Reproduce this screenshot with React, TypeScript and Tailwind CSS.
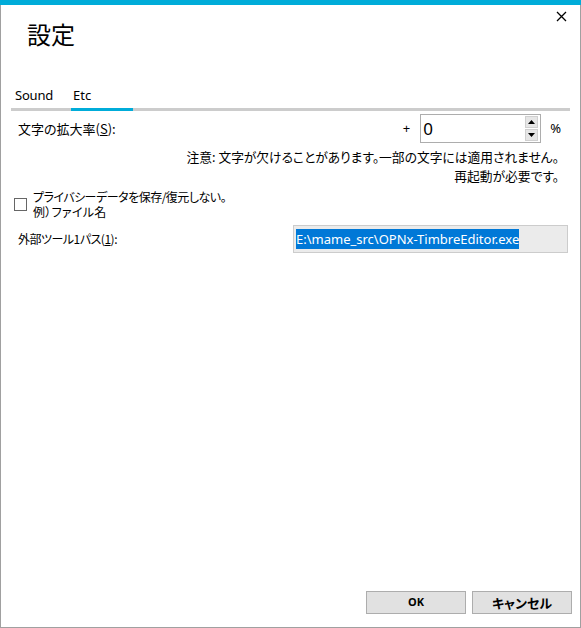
import React from "react";

const jp = "font-['Yu_Gothic_UI','Noto_Sans_CJK_JP',sans-serif] [font-feature-settings:'palt']";
const latin = "font-['Noto_Sans','Liberation_Sans',sans-serif]";

function CloseIcon() {
  return (
    <svg width="11" height="11" viewBox="0 0 11 11" className="block">
      <path d="M1 1 L10 10 M10 1 L1 10" stroke="#000" strokeWidth="1.3" fill="none" />
    </svg>
  );
}

function SpinBox() {
  return (
    <div className="flex h-[29px] w-[121px] items-center border border-[#adadad] bg-white pl-[2px] pr-[2px]">
      <span className={`flex-1 text-[17px] leading-none text-[#000] ${latin}`}>0</span>
      <div className="flex flex-col gap-[1px]">
        <div className="flex h-[12px] w-[13px] items-center justify-center border border-[#d0d0d0] bg-[#e6e6e6]">
          <svg width="7" height="4" viewBox="0 0 7 4">
            <path d="M0 4 L3.5 0 L7 4 Z" fill="#000" />
          </svg>
        </div>
        <div className="flex h-[12px] w-[13px] items-center justify-center border border-[#d0d0d0] bg-[#e6e6e6]">
          <svg width="7" height="4" viewBox="0 0 7 4">
            <path d="M0 0 L7 0 L3.5 4 Z" fill="#000" />
          </svg>
        </div>
      </div>
    </div>
  );
}

export default function App() {
  return (
    <div className="h-[628px] w-[581px] bg-white text-black">
      <div className="h-[5px] w-full bg-[#00acd9]" />
      <div className="flex h-[623px] flex-col border-x border-b border-[#a0a0a0]">
        {/* header */}
        <div className="flex items-start justify-between">
          <div className={`pl-[26px] pt-[13px] text-[24px] leading-[32px] ${jp}`}>設定</div>
          <div className="pr-[13px] pt-[6px]">
            <CloseIcon />
          </div>
        </div>

        {/* tabs */}
        <div className={`mt-[35px] flex pl-[10px] pr-[10px] text-[13px] ${latin}`}>
          <div className="flex w-[60px] flex-col">
            <span className="pl-[4px] leading-[20px] tracking-[-0.2px]">Sound</span>
            <div className="mt-[3px] h-[3px] bg-[#cccccc]" />
          </div>
          <div className="flex w-[62px] flex-col">
            <span className="pl-[2px] leading-[20px]">Etc</span>
            <div className="mt-[3px] h-[3px] bg-[#00acd9]" />
          </div>
          <div className="flex flex-1 flex-col justify-end">
            <div className="h-[3px] bg-[#cccccc]" />
          </div>
        </div>

        {/* zoom rate row */}
        <div className={`mt-[3px] flex items-center text-[13px] ${jp}`}>
          <span className="pl-[17px] leading-[18px]">
            文字の拡大率(<span className="underline">S</span>):
          </span>
          <span className={`ml-auto mr-[10px] ${latin}`}>+</span>
          <SpinBox />
          <span className={`ml-[9px] mr-[19px] ${latin}`}>%</span>
        </div>

        <div className={`mt-[4px] pr-[21px] text-right text-[12.75px] leading-[19px] ${jp}`}>
          <div>注意: 文字が欠けることがあります。一部の文字には適用されません。</div>
          <div>再起動が必要です。</div>
        </div>

        {/* checkbox */}
        <div className={`mt-[4px] flex items-center pl-[13px] text-[12px] leading-[15px] ${jp}`}>
          <div className="h-[13px] w-[13px] border border-[#666666] bg-white" />
          <div className="ml-[6px]">
            <div className="tracking-[-0.5px]">プライバシーデータを保存/復元しない。</div>
            <div className="tracking-[0.3px]">例）ファイル名</div>
          </div>
        </div>

        {/* external tool */}
        <div className={`mt-[6px] flex items-center text-[12px] ${jp}`}>
          <span className="pl-[17px] leading-[18px] tracking-[-0.5px]">
            外部ツール1パス(<span className="underline">1</span>):
          </span>
          <div className="ml-auto mr-[12px] flex h-[28px] w-[275px] items-center border border-[#cccccc] bg-[#ebebeb] pl-[2px]">
            <span className={`bg-[#0078d7] text-[13px] leading-[20px] text-white ${latin}`}>
              E:\mame_src\OPNx-TimbreEditor.exe
            </span>
          </div>
        </div>

        {/* buttons */}
        <div className="mt-auto mb-[13px] flex justify-end gap-[6px] pr-[8px]">
          <button className={`h-[23px] w-[100px] border border-[#adadad] bg-[#e1e1e1] text-[11px] font-bold ${latin}`}>
            OK
          </button>
          <button className={`h-[23px] w-[100px] border border-[#adadad] bg-[#e1e1e1] text-[13px] font-bold ${jp}`}>
            キャンセル
          </button>
        </div>
      </div>
    </div>
  );
}
